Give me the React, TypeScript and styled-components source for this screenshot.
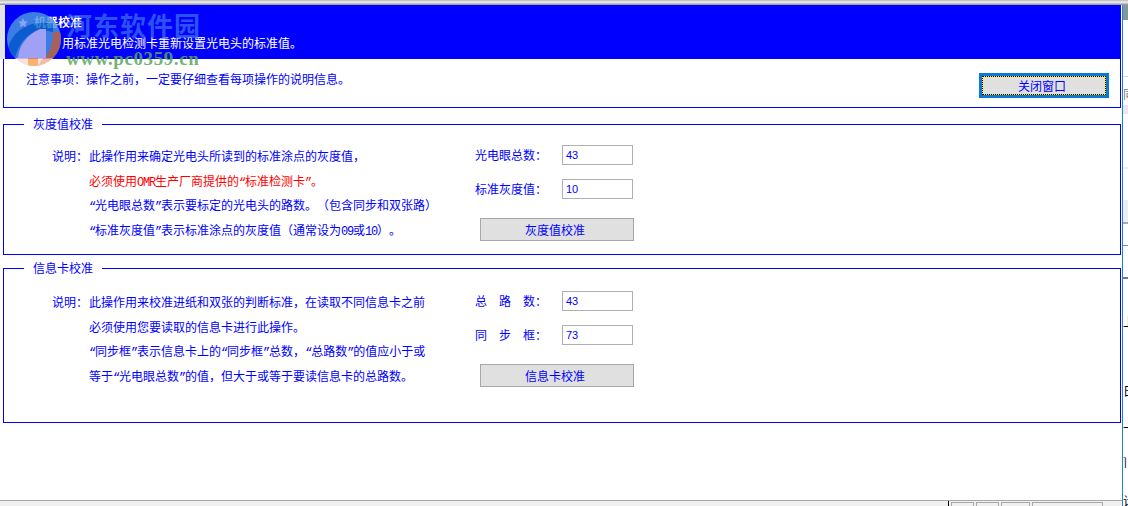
import React from 'react';
import styled, { createGlobalStyle } from 'styled-components';

const GlobalStyle = createGlobalStyle`
  html, body {
    margin: 0;
    padding: 0;
    background: #fff;
  }
  body {
    font-family: "Noto Sans CJK SC", "Liberation Sans", sans-serif;
    font-size: 12px;
    color: #0000ff;
    text-spacing-trim: space-all;
  }
`;

const Page = styled.div`
  width: 1128px;
  height: 506px;
  position: relative;
  overflow: hidden;
  background: #fff;
  display: flex;
  flex-direction: column;
`;

const TopEdge = styled.div`
  height: 5px;
  flex: none;
  background: linear-gradient(#b8b8b8, #f0f0f0 45%, #8a8a8a);
`;

const Main = styled.div`
  flex: 1;
  display: flex;
  min-height: 0;
`;

const Content = styled.div`
  width: 1123px;
  flex: none;
  display: flex;
  flex-direction: column;
  padding-left: 3px;
  box-sizing: border-box;
  border-right: 1px solid #1a84de;
`;

const Side = styled.div`
  flex: 1;
  overflow: hidden;
  display: flex;
  flex-direction: column;
`;

const SideBand = styled.div<{ $height: number; $color?: string }>`
  height: ${(p) => p.$height}px;
  flex: none;
  background: ${(p) => p.$color || '#fff'};
`;

const SideGlyph = styled.div<{ $color?: string }>`
  height: 12px;
  flex: none;
  line-height: 12px;
  white-space: nowrap;
  color: ${(p) => p.$color || '#000'};
`;

const Header = styled.div`
  height: 54px;
  flex: none;
  margin: 0 1px 0 -3px;
  background: #0000ff;
  color: #fff;
  padding: 9px 0 0 13px;
  box-sizing: border-box;
  border-left: 5px solid #e4e4e4;
  box-shadow: -1px 0 #808080;
`;

const HeaderTitle = styled.div`
  font-weight: bold;
  line-height: 16px;
  padding-left: 16px;
`;

const HeaderNote = styled.div`
  line-height: 16px;
  margin-top: 5px;
  padding-left: 44px;
`;

const Notice = styled.div`
  width: 1118px;
  height: 49px;
  flex: none;
  box-sizing: border-box;
  border: 1px solid #0000ff;
  border-top: 0;
  display: flex;
  justify-content: space-between;
  align-items: flex-start;
  padding: 11px 11px 0 22px;
  line-height: 18px;
`;

const CloseButton = styled.button`
  width: 130px;
  height: 25px;
  margin-top: 3px;
  box-sizing: border-box;
  background: #ffe600;
  border: 3px solid #0a7ad6;
  color: #0000ff;
  font: inherit;
  padding: 0;
  display: block;
`;

const CloseLabel = styled.span`
  display: flex;
  align-items: center;
  justify-content: center;
  height: 100%;
  box-sizing: border-box;
  border: 1px dotted #000;
  background: #e0e0e0;
  background-clip: padding-box;
  padding-right: 4px;
`;

const Group = styled.fieldset<{ $height: number; $top: number }>`
  width: 1118px;
  height: ${(p) => p.$height}px;
  flex: none;
  margin: ${(p) => p.$top}px 0 0;
  padding: 0;
  box-sizing: border-box;
  border: 1px solid #0000ff;
  display: grid;
  grid-template-columns: 471px 1fr;
  align-content: start;
`;

const Legend = styled.legend`
  margin-left: 20px;
  padding: 0 9px;
  line-height: 16px;
  height: 16px;
`;

const Notes = styled.div<{ $pad: number }>`
  padding: ${(p) => p.$pad}px 0 0 48px;
`;

const NoteRow = styled.div<{ $red?: boolean }>`
  display: flex;
  height: 24.7px;
  line-height: 18px;
  color: ${(p) => (p.$red ? '#ff0000' : '#0000ff')};
`;

const NoteLabel = styled.span`
  width: 37px;
  flex: none;
`;

// half-width latin, quotes and digits, 6px per character like the reference
const Half = styled.span`
  font: 12px "Liberation Mono", monospace;
  letter-spacing: -1.2px;
`;

const Controls = styled.div<{ $pad: number }>`
  padding-top: ${(p) => p.$pad}px;
`;

const FieldRow = styled.div`
  display: flex;
  align-items: center;
  height: 20px;
  margin-bottom: 14px;
`;

const FieldLabel = styled.label`
  width: 87px;
  flex: none;
  box-sizing: border-box;
  margin-bottom: 2px;
`;

const FieldInput = styled.input`
  width: 71px;
  height: 20px;
  box-sizing: border-box;
  border: 1px solid #aeaeb4;
  color: #0000ff;
  font: 11px "Liberation Sans", sans-serif;
  padding: 0 3px;
  outline: none;
`;

const ActionButton = styled.button`
  width: 154px;
  height: 23px;
  margin: 19px 0 0 5px;
  box-sizing: border-box;
  background: #e0e0e0;
  border: 1px solid #a8a8a8;
  color: #0000ff;
  font: inherit;
  padding: 0 4px 0 0;
  display: block;
`;

const StatusBar = styled.div`
  height: 6px;
  flex: none;
  margin: auto 0 0 -3px;
  box-sizing: border-box;
  border-top: 1px solid #a8a8a8;
  background: #f0f0f0;
  display: flex;
  padding-left: 948px;
`;

const StatusDivider = styled.div`
  width: 1px;
  margin-right: 2px;
  background: #000;
`;

const StatusCell = styled.div<{ $width: number }>`
  width: ${(p) => p.$width}px;
  margin: 1px 2px 0 0;
  box-sizing: border-box;
  border: 1px solid #a8a8a8;
  border-bottom: 0;
`;

const Watermark = styled.div`
  position: absolute;
  left: 7px;
  top: 12px;
  width: 200px;
  height: 55px;
  pointer-events: none;
`;

const LogoSvg = styled.svg`
  position: absolute;
  left: 0;
  top: 0;
  opacity: 0.82;
`;

const WatermarkName = styled.div`
  position: absolute;
  left: 59px;
  top: 0;
  font: bold 26px "Liberation Serif", "Noto Sans CJK SC", serif;
  line-height: 32px;
  letter-spacing: 1px;
  color: rgba(70, 130, 240, 0.65);
  white-space: nowrap;
`;

const WatermarkUrl = styled.div`
  position: absolute;
  left: 59px;
  top: 37px;
  font: bold 19px "Liberation Serif", serif;
  line-height: 20px;
  letter-spacing: 0.6px;
  color: rgba(90, 165, 90, 0.85);
  white-space: nowrap;
`;

const LogoMark = () => (
  <LogoSvg width="54" height="55" viewBox="0 0 54 55">
    <defs>
      <clipPath id="logo-disc">
        <circle cx="27" cy="27" r="27" />
      </clipPath>
    </defs>
    <g clipPath="url(#logo-disc)">
      <rect width="54" height="46" fill="#4a98e0" />
      <rect y="46" width="54" height="9" fill="#f6dcd8" />
      <path d="M54 20 L54 46 L38 46 Q46 36 46 20 Z" fill="#c87838" />
      <path d="M36 46 L54 46 L44 55 L30 55 Z" fill="#f0b090" />
      <path d="M1 36 C6 18 24 7 46 12 L46 20 C28 15 14 24 8 46 L3 46 Z" fill="#1070c8" />
      <path d="M11 46 C12 34 20 22 33 17 L39 17 L39 46 Z" fill="#c4c4f4" />
      <rect x="21" y="46" width="10" height="9" fill="#f8a050" />
      <path d="M16 6 l1.5 3.2 3.4.4-2.5 2.3.7 3.4-3.1-1.8-3.1 1.8.7-3.4-2.5-2.3 3.4-.4z" fill="#a8c8f0" />
    </g>
  </LogoSvg>
);

const App = () => (
  <Page>
    <GlobalStyle />
    <TopEdge />
    <Main>
      <Content>
        <Header>
          <HeaderTitle>机器校准</HeaderTitle>
          <HeaderNote>用标准光电检测卡重新设置光电头的标准值。</HeaderNote>
        </Header>
        <Notice>
          <span>注意事项：操作之前，一定要仔细查看每项操作的说明信息。</span>
          <CloseButton>
            <CloseLabel>关闭窗口</CloseLabel>
          </CloseButton>
        </Notice>

        <Group $height={139} $top={8}>
          <Legend>灰度值校准</Legend>
          <Notes $pad={15}>
            <NoteRow>
              <NoteLabel>说明：</NoteLabel>
              <span>此操作用来确定光电头所读到的标准涂点的灰度值，</span>
            </NoteRow>
            <NoteRow $red>
              <NoteLabel />
              <span>必须使用<Half>OMR</Half>生产厂商提供的<Half>“</Half>标准检测卡<Half>”</Half>。</span>
            </NoteRow>
            <NoteRow>
              <NoteLabel />
              <span><Half>“</Half>光电眼总数<Half>”</Half>表示要标定的光电头的路数。（包含同步和双张路）</span>
            </NoteRow>
            <NoteRow>
              <NoteLabel />
              <span><Half>“</Half>标准灰度值<Half>”</Half>表示标准涂点的灰度值（通常设为<Half>09</Half>或<Half>10</Half>）。</span>
            </NoteRow>
          </Notes>
          <Controls $pad={13}>
            <FieldRow>
              <FieldLabel>光电眼总数：</FieldLabel>
              <FieldInput defaultValue="43" />
            </FieldRow>
            <FieldRow>
              <FieldLabel>标准灰度值：</FieldLabel>
              <FieldInput defaultValue="10" />
            </FieldRow>
            <ActionButton>灰度值校准</ActionButton>
          </Controls>
        </Group>

        <Group $height={163} $top={5}>
          <Legend>信息卡校准</Legend>
          <Notes $pad={17}>
            <NoteRow>
              <NoteLabel>说明：</NoteLabel>
              <span>此操作用来校准进纸和双张的判断标准，在读取不同信息卡之前</span>
            </NoteRow>
            <NoteRow>
              <NoteLabel />
              <span>必须使用您要读取的信息卡进行此操作。</span>
            </NoteRow>
            <NoteRow>
              <NoteLabel />
              <span><Half>“</Half>同步框<Half>”</Half>表示信息卡上的<Half>“</Half>同步框<Half>”</Half>总数，<Half>“</Half>总路数<Half>”</Half>的值应小于或</span>
            </NoteRow>
            <NoteRow>
              <NoteLabel />
              <span>等于<Half>“</Half>光电眼总数<Half>”</Half>的值，但大于或等于要读信息卡的总路数。</span>
            </NoteRow>
          </Notes>
          <Controls $pad={15}>
            <FieldRow>
              <FieldLabel>总　路　数：</FieldLabel>
              <FieldInput defaultValue="43" />
            </FieldRow>
            <FieldRow>
              <FieldLabel>同　步　框：</FieldLabel>
              <FieldInput defaultValue="73" />
            </FieldRow>
            <ActionButton>信息卡校准</ActionButton>
          </Controls>
        </Group>

        <StatusBar>
          <StatusDivider />
          <StatusCell $width={23} />
          <StatusCell $width={23} />
          <StatusCell $width={29} />
          <StatusCell $width={71} />
        </StatusBar>
      </Content>
      <Side>
        <SideBand $height={15} $color="#7f9a96" />
        <SideBand $height={56} />
        <SideBand $height={1} $color="#ddd" />
        <SideBand $height={11} />
        <SideGlyph $color="#777">同</SideGlyph>
        <SideBand $height={5} />
        <SideBand $height={9} $color="#e8e8e8" />
        <SideBand $height={53} />
        <SideBand $height={2} $color="#eee" />
        <SideBand $height={31} />
        <SideBand $height={22} $color="#eee" />
        <SideBand $height={2} $color="#aaa" />
        <SideBand $height={21} />
        <SideBand $height={1} $color="#888" />
        <SideBand $height={31} />
        <SideBand $height={2} $color="#777" />
        <SideBand $height={37} />
        <SideGlyph>上</SideGlyph>
        <SideBand $height={57} />
        <SideGlyph>日</SideGlyph>
        <SideBand $height={25} />
        <SideGlyph>十</SideGlyph>
        <SideBand $height={22} />
        <SideGlyph>]</SideGlyph>
        <SideBand $height={27} />
        <SideGlyph>计</SideGlyph>
      </Side>
    </Main>
    <Watermark>
      <LogoMark />
      <WatermarkName>河东软件园</WatermarkName>
      <WatermarkUrl>www.pc0359.cn</WatermarkUrl>
    </Watermark>
  </Page>
);

export default App;
